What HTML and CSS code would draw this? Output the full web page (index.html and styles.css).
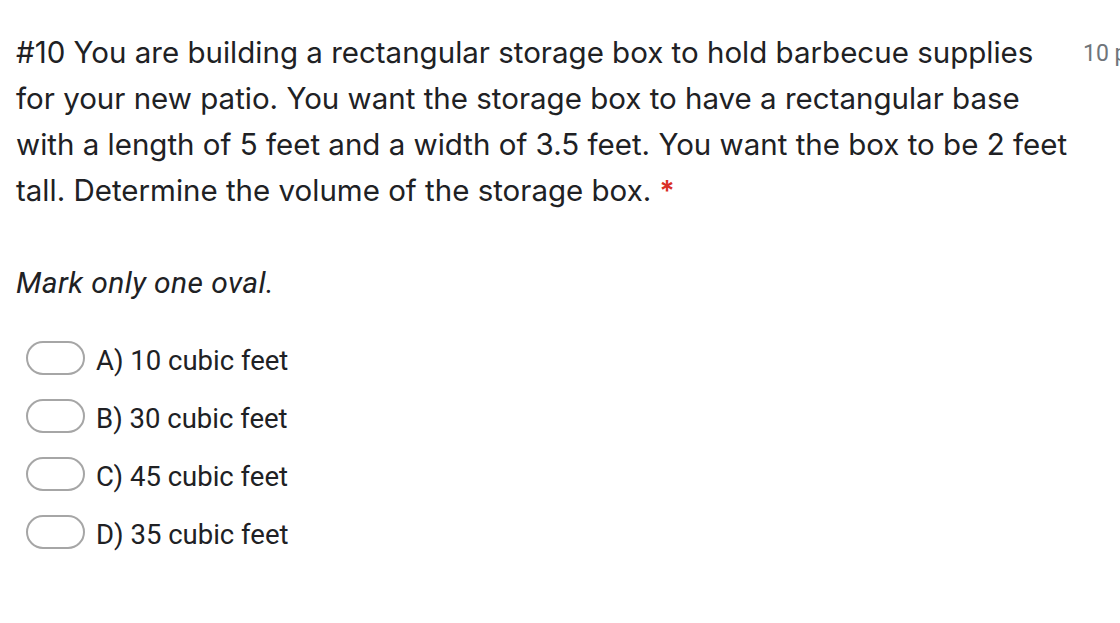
FILE: index.html
```html
<!DOCTYPE html>
<html>
<head>
<meta charset="utf-8">
<link rel="stylesheet" href="styles.css">
</head>
<body>
<div class="page">
  <div class="item">
    <div class="header">
      <div class="question">#10 You are building a rectangular storage box to hold barbecue supplies for your new patio. You want the storage box to have a rectangular base with a length of 5 feet and a width of 3.5 feet. You want the box to be 2 feet tall. Determine the volume of the storage box. <span class="req">*</span></div>
      <div class="points">10 points</div>
    </div>
    <div class="hint">Mark only one oval.</div>
    <div class="options">
      <div class="option"><span class="oval"></span><span class="label">A) 10 cubic feet</span></div>
      <div class="option"><span class="oval"></span><span class="label">B) 30 cubic feet</span></div>
      <div class="option"><span class="oval"></span><span class="label">C) 45 cubic feet</span></div>
      <div class="option"><span class="oval"></span><span class="label">D) 35 cubic feet</span></div>
    </div>
  </div>
</div>
</body>
</html>
```
FILE: styles.css
```css
html, body {
  margin: 0;
  padding: 0;
  background: #fff;
  overflow: hidden;
}
.page {
  width: 1120px;
  height: 623px;
  overflow: hidden;
}
.item {
  padding: 29px 0 0 16px;
}
.header {
  display: flex;
  align-items: flex-start;
  width: 1200px;
}
.question {
  width: 1058px;
  flex: none;
  font-family: "Inter", sans-serif;
  font-size: 29.5px;
  line-height: 46px;
  color: #202124;
}
.req {
  color: #d93025;
  font-weight: 600;
  font-size: 28px;
  line-height: 1;
}
.points {
  margin-left: 9px;
  padding-top: 2px;
  font-family: "Roboto", sans-serif;
  font-size: 23px;
  line-height: 46px;
  color: #70757a;
  white-space: nowrap;
}
.hint {
  margin-top: 52px;
  font-family: "Roboto", sans-serif;
  font-style: italic;
  font-size: 30px;
  letter-spacing: 0.4px;
  color: #202124;
}
.options {
  margin-top: 41px;
  display: flex;
  flex-direction: column;
  gap: 24px;
}
.option {
  display: flex;
  align-items: center;
  height: 34px;
}
.oval {
  box-sizing: border-box;
  flex: none;
  width: 59px;
  height: 34px;
  margin-left: 10px;
  border: 2px solid #a6a6a6;
  border-radius: 17px;
}
.label {
  margin-left: 11px;
  margin-top: 5px;
  font-family: "Roboto", sans-serif;
  font-size: 27.5px;
  color: #202124;
}
```
